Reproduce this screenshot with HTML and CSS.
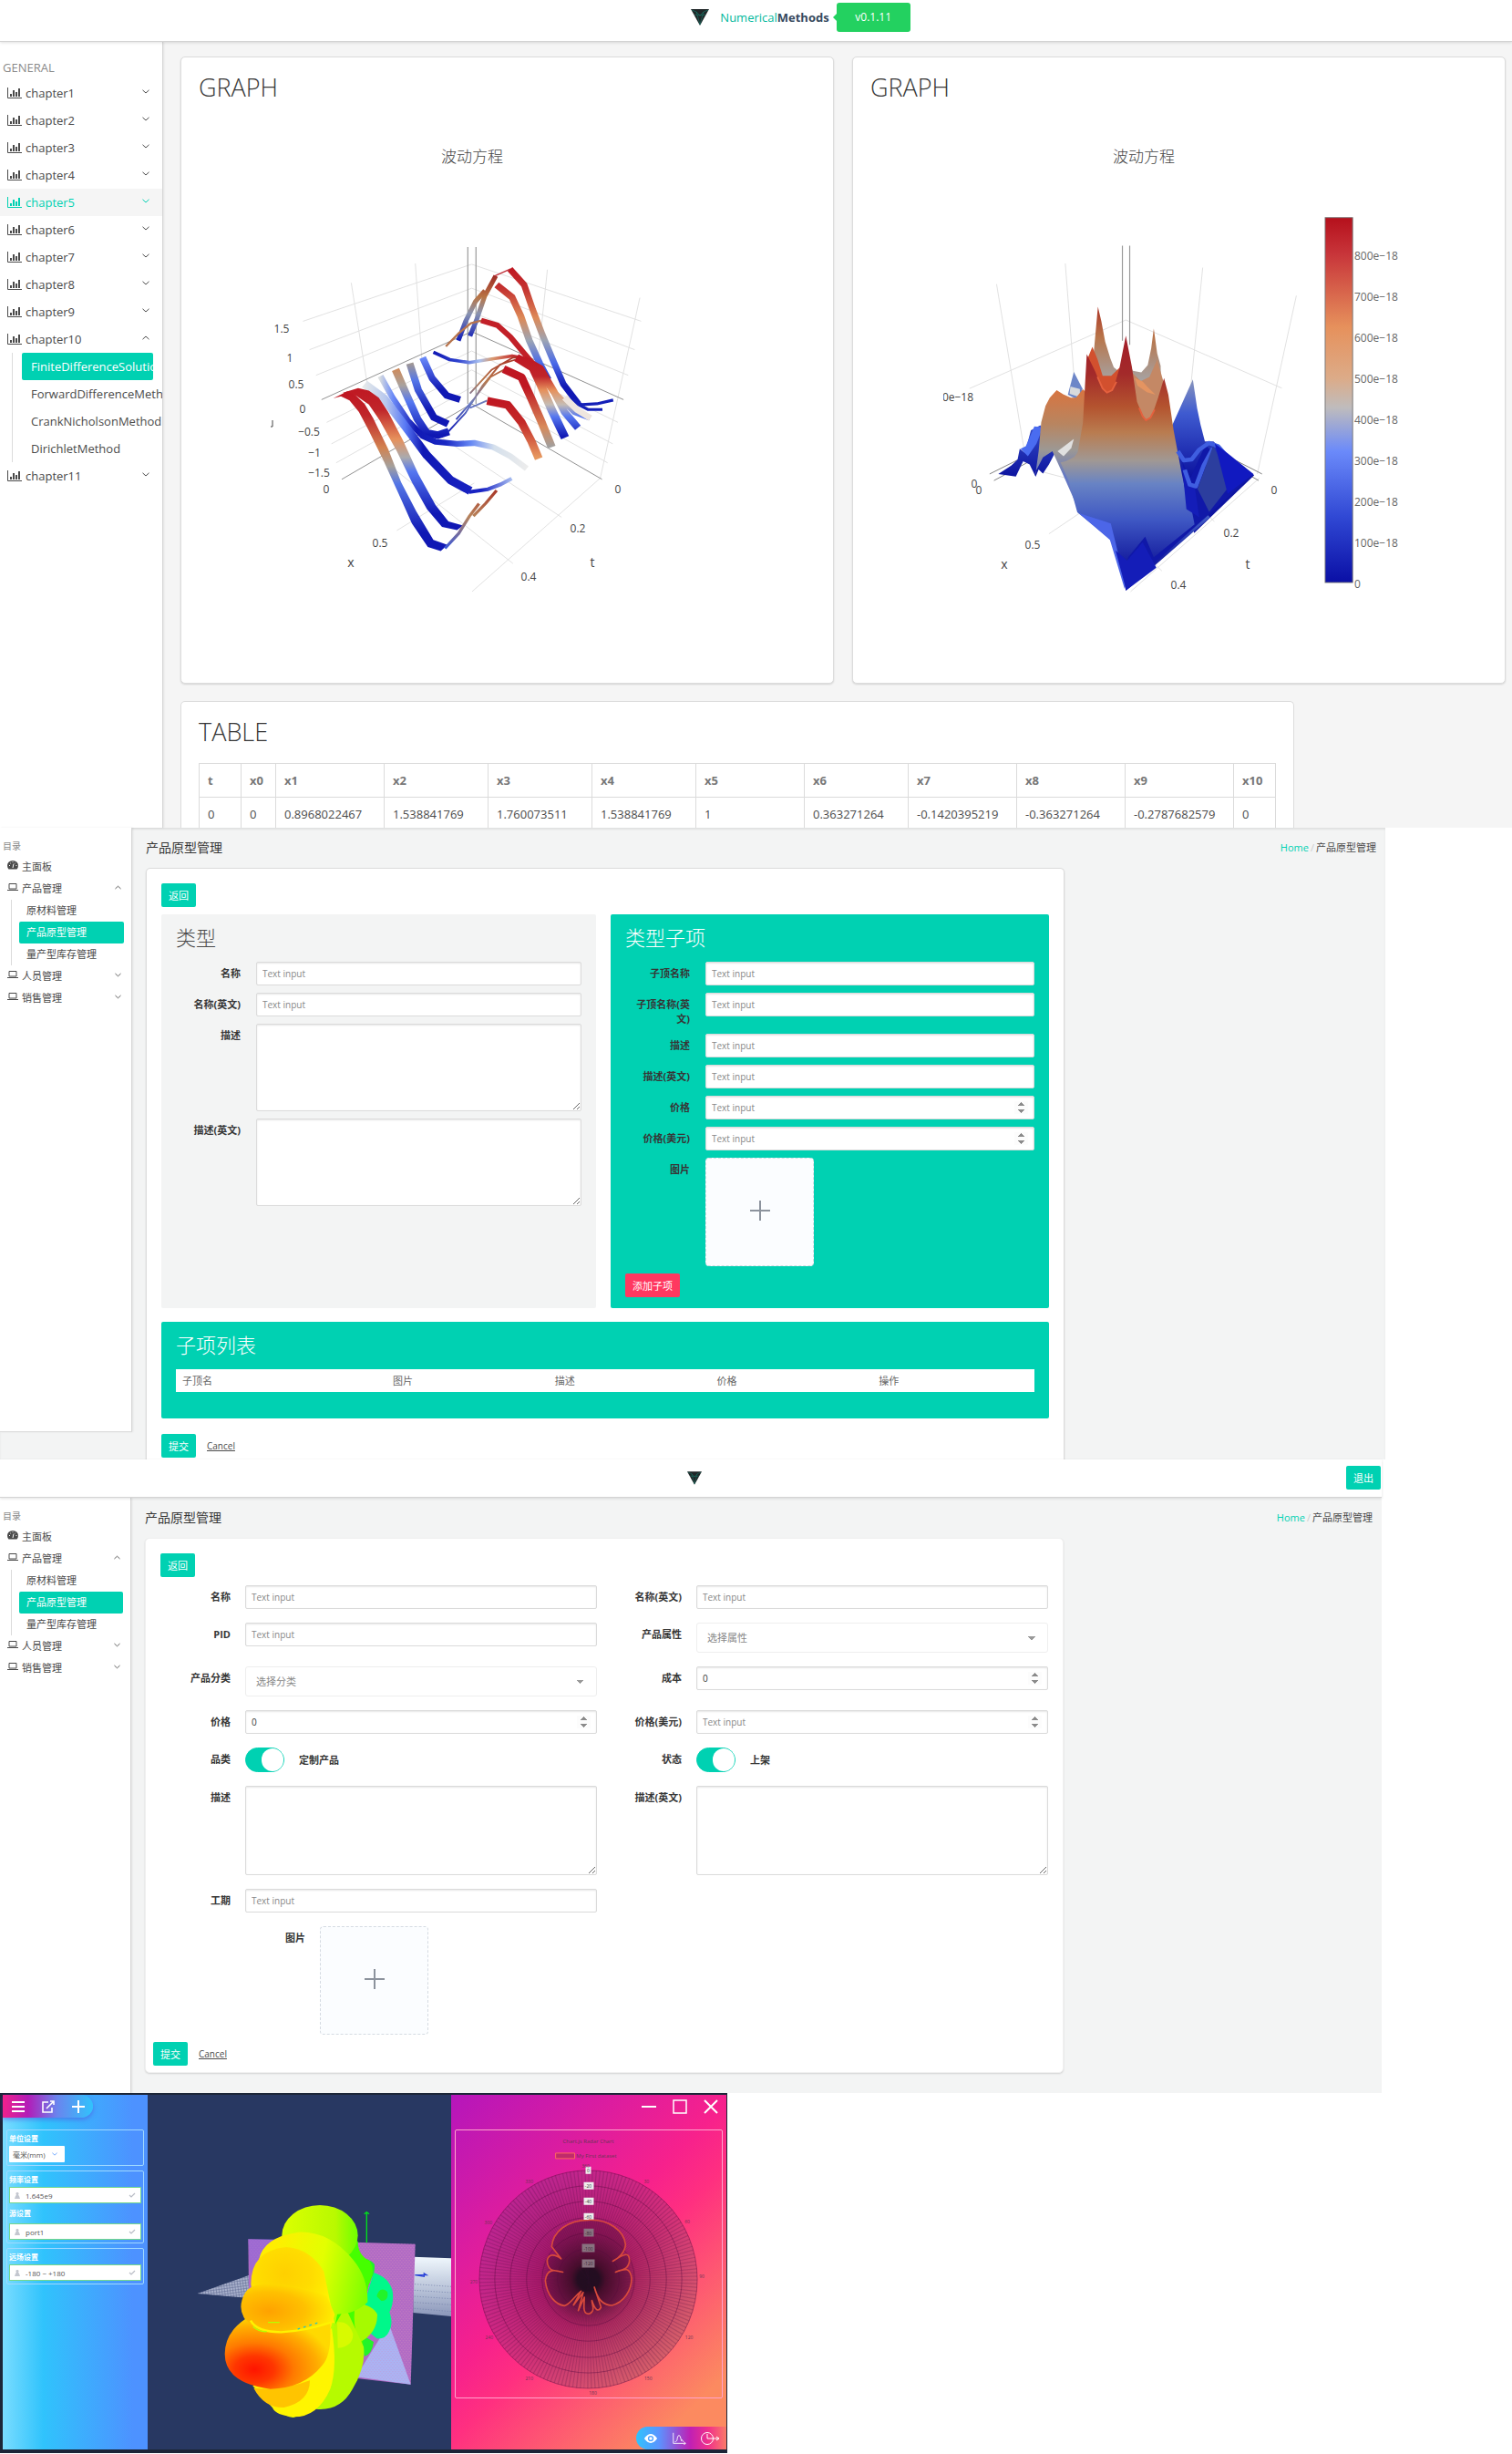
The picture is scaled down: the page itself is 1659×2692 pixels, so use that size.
FILE: index.html
```html
<!DOCTYPE html>
<html lang="zh-CN">
<head>
<meta charset="utf-8">
<meta name="viewport" content="width=device-width, initial-scale=1">
<title>NumericalMethods</title>
<link rel="stylesheet" href="styles.css">
</head>
<body>
<svg class="defs" aria-hidden="true">
  <symbol id="i-bars" viewBox="0 0 16 12"><path d="M.5 0v11.500H16" fill="none" stroke="currentColor" stroke-width="1"/><path d="M3 7h2v3H3zM6 3h2v7H6zM9 5h2v5H9zM12 1h2v9h-2z" fill="currentColor"/></symbol>
  <symbol id="i-down" viewBox="0 0 8 5"><path d="M.5.8 4 4 7.500.8" fill="none" stroke="currentColor" stroke-width="1"/></symbol>
  <symbol id="i-up" viewBox="0 0 8 5"><path d="M.5 4.200 4 1l3.500 3.200" fill="none" stroke="currentColor" stroke-width="1"/></symbol>
  <symbol id="i-laptop" viewBox="0 0 12 9"><path d="M2 1h8v5.500H2zM0 8h12" fill="none" stroke="currentColor" stroke-width="1"/></symbol>
  <symbol id="i-dash" viewBox="0 0 12 10"><path d="M1.500 9.500A6 6 0 0 1 0 5.500a6 5.500 0 0 1 12 0 6 6 0 0 1-1.500 4z" fill="currentColor"/><path d="M6 8 7 3.500M2 5.500h1M9.500 5.500h1M3.300 2.800l.8.700M5.500 1.500h1M8.500 3l.6-.5" stroke="#fff" stroke-width="1"/></symbol>
  <symbol id="i-logo" viewBox="0 0 20 18"><path d="M0 0h20L10 18z" fill="#202628"/><path d="M1 1l5 2 4 14L14 3l5-2M6 3l4 4 4-4M4 6l6 1 6-1" fill="none" stroke="#17806f" stroke-width=".6"/></symbol>
  <symbol id="i-user" viewBox="0 0 6 7"><path d="M3 0a1.500 1.500 0 0 1 1 2.700L5 4l1 3H0l1-3 1-1.300A1.500 1.500 0 0 1 3 0z" fill="#c3c7cf"/></symbol>
  <symbol id="i-tick" viewBox="0 0 8 6"><path d="M1 3l2 2 4-4" fill="none" stroke="#b9bdc6" stroke-width="1.200"/></symbol>
</svg>

<section class="app methods">
  <header class="topbar brandbar">
    <a class="brand" href="#"><svg class="logo"><use href="#i-logo"/></svg><span>Numerical<b>Methods</b></span></a>
    <span class="version">v0.1.11</span>
  </header>
  <div class="split">
    <nav class="side">
      <p class="side-label">GENERAL</p>
      <a class="item" href="#"><svg class="ic"><use href="#i-bars"/></svg>chapter1<svg class="chev"><use href="#i-down"/></svg></a>
      <a class="item" href="#"><svg class="ic"><use href="#i-bars"/></svg>chapter2<svg class="chev"><use href="#i-down"/></svg></a>
      <a class="item" href="#"><svg class="ic"><use href="#i-bars"/></svg>chapter3<svg class="chev"><use href="#i-down"/></svg></a>
      <a class="item" href="#"><svg class="ic"><use href="#i-bars"/></svg>chapter4<svg class="chev"><use href="#i-down"/></svg></a>
      <a class="item hover" href="#"><svg class="ic"><use href="#i-bars"/></svg>chapter5<svg class="chev"><use href="#i-down"/></svg></a>
      <a class="item" href="#"><svg class="ic"><use href="#i-bars"/></svg>chapter6<svg class="chev"><use href="#i-down"/></svg></a>
      <a class="item" href="#"><svg class="ic"><use href="#i-bars"/></svg>chapter7<svg class="chev"><use href="#i-down"/></svg></a>
      <a class="item" href="#"><svg class="ic"><use href="#i-bars"/></svg>chapter8<svg class="chev"><use href="#i-down"/></svg></a>
      <a class="item" href="#"><svg class="ic"><use href="#i-bars"/></svg>chapter9<svg class="chev"><use href="#i-down"/></svg></a>
      <a class="item" href="#"><svg class="ic"><use href="#i-bars"/></svg>chapter10<svg class="chev"><use href="#i-up"/></svg></a>
      <div class="sub">
        <a class="active" href="#">FiniteDifferenceSolution</a>
        <a href="#">ForwardDifferenceMethod</a>
        <a href="#">CrankNicholsonMethod</a>
        <a href="#">DirichletMethod</a>
      </div>
      <a class="item" href="#"><svg class="ic"><use href="#i-bars"/></svg>chapter11<svg class="chev"><use href="#i-down"/></svg></a>
    </nav>
    <main class="content">
      <div class="graphs">
        <article class="card">
          <h2>GRAPH</h2>
          <svg class="plot" viewBox="218 112 677 619">
            <defs>
              <linearGradient id="a1" gradientUnits="userSpaceOnUse" x1="0" y1="845" x2="0" y2="1220"><stop offset="0" stop-color="#bf1722"/><stop offset=".14" stop-color="#c0252a"/><stop offset=".35" stop-color="#d28250"/><stop offset=".47" stop-color="#a5a09b"/><stop offset=".58" stop-color="#5577e6"/><stop offset=".9" stop-color="#1018b4"/></linearGradient>
              <linearGradient id="a2" gradientUnits="userSpaceOnUse" x1="0" y1="830" x2="0" y2="1170"><stop offset="0" stop-color="#bf1722"/><stop offset=".16" stop-color="#c0252a"/><stop offset=".37" stop-color="#e6915c"/><stop offset=".5" stop-color="#aaaaae"/><stop offset=".6" stop-color="#5577f0"/><stop offset=".9" stop-color="#1018b4"/></linearGradient>
              <linearGradient id="a3" gradientUnits="userSpaceOnUse" x1="443" y1="0" x2="787" y2="0"><stop offset="0" stop-color="#e6eaea"/><stop offset=".15" stop-color="#b8c8ee"/><stop offset=".28" stop-color="#5a7af5"/><stop offset=".4" stop-color="#1018b4"/><stop offset=".8" stop-color="#1a24c4"/><stop offset="1" stop-color="#a8bdf0"/></linearGradient>
              <linearGradient id="a4" gradientUnits="userSpaceOnUse" x1="480" y1="0" x2="822" y2="0"><stop offset="0" stop-color="#dadedf"/><stop offset=".09" stop-color="#6d8cf8"/><stop offset=".25" stop-color="#1018b4"/><stop offset=".45" stop-color="#1a28c4"/><stop offset=".62" stop-color="#6688f4"/><stop offset=".78" stop-color="#d5e0ec"/><stop offset="1" stop-color="#ececec"/></linearGradient>
              <linearGradient id="a5" gradientUnits="userSpaceOnUse" x1="0" y1="785" x2="0" y2="945"><stop offset="0" stop-color="#cf8a5a"/><stop offset=".25" stop-color="#aaa29d"/><stop offset=".5" stop-color="#5577f0"/><stop offset="1" stop-color="#1018b4"/></linearGradient>
              <linearGradient id="a6" gradientUnits="userSpaceOnUse" x1="0" y1="770" x2="0" y2="915"><stop offset="0" stop-color="#a59a90"/><stop offset=".3" stop-color="#5577e8"/><stop offset=".8" stop-color="#1018b4"/></linearGradient>
              <linearGradient id="a7" gradientUnits="userSpaceOnUse" x1="0" y1="758" x2="0" y2="855"><stop offset="0" stop-color="#6a8afa"/><stop offset=".8" stop-color="#1018b4"/></linearGradient>
              <linearGradient id="a8" gradientUnits="userSpaceOnUse" x1="605" y1="0" x2="800" y2="0"><stop offset="0" stop-color="#1018b4"/><stop offset=".3" stop-color="#3044d0"/><stop offset=".55" stop-color="#a8c0f0"/><stop offset=".7" stop-color="#d89a70"/><stop offset="1" stop-color="#c0202a"/></linearGradient>
              <linearGradient id="a9" gradientUnits="userSpaceOnUse" x1="0" y1="755" x2="0" y2="950"><stop offset="0" stop-color="#bf1722"/><stop offset=".25" stop-color="#c0252a"/><stop offset=".42" stop-color="#e6915c"/><stop offset=".6" stop-color="#c5bcb4"/><stop offset=".75" stop-color="#5577f0"/><stop offset="1" stop-color="#1018b4"/></linearGradient>
              <linearGradient id="a10" gradientUnits="userSpaceOnUse" x1="0" y1="540" x2="0" y2="880"><stop offset="0" stop-color="#bf1722"/><stop offset=".15" stop-color="#c43230"/><stop offset=".36" stop-color="#dd8a58"/><stop offset=".52" stop-color="#9ca4b4"/><stop offset=".68" stop-color="#4a6ae8"/><stop offset=".85" stop-color="#1018b4"/></linearGradient>
              <linearGradient id="a11" gradientUnits="userSpaceOnUse" x1="0" y1="860" x2="0" y2="1000"><stop offset="0" stop-color="#bf1722"/><stop offset=".4" stop-color="#c42a28"/><stop offset="1" stop-color="#e6985f"/></linearGradient>
              <linearGradient id="a12" gradientUnits="userSpaceOnUse" x1="0" y1="780" x2="0" y2="975"><stop offset="0" stop-color="#bf1722"/><stop offset=".25" stop-color="#bf1722"/><stop offset=".75" stop-color="#d88a5a"/><stop offset="1" stop-color="#a0a0a0"/></linearGradient>
              <linearGradient id="a13" gradientUnits="userSpaceOnUse" x1="0" y1="555" x2="0" y2="715"><stop offset="0" stop-color="#9c2422"/><stop offset=".35" stop-color="#b87444"/><stop offset=".6" stop-color="#8a94b0"/><stop offset="1" stop-color="#1420b8"/></linearGradient>
              <linearGradient id="a14" gradientUnits="userSpaceOnUse" x1="0" y1="760" x2="0" y2="940"><stop offset="0" stop-color="#a83828"/><stop offset=".3" stop-color="#b8784c"/><stop offset=".6" stop-color="#6a7cc0"/><stop offset="1" stop-color="#1018b4"/></linearGradient>
              <linearGradient id="a15" gradientUnits="userSpaceOnUse" x1="0" y1="1080" x2="0" y2="1220"><stop offset="0" stop-color="#a83828"/><stop offset=".45" stop-color="#b8845c"/><stop offset="1" stop-color="#3a58d8"/></linearGradient>
            </defs>
            <g transform="translate(190 50) scale(.47194 .45281)" fill="none" stroke-linejoin="round">
              <path stroke="#dedede" stroke-width="2" d="M302 670 694 532l394 138M317 739 694 590l379 149M332 801 694 648l364 153M357 915 694 742l340 173M368 967 694 788l328 179M379 1013 694 830l316 183M414 577l38 250M563 530l15 230M870 545l-35 350M1085 613l-92 437M520 1177l180-115M993 1050 695 1325M903 1145 600 935M790 1257 480 1000"/>
              <path stroke="#999" stroke-width="2.500" d="M685 490v380M704 490v380"/>
              <path stroke="#888" stroke-width="2" d="M345 860 694 695l353 165M392 1053 694 870l303 183"/>
              <g stroke="url(#a13)"><path stroke-width="11" d="M663 717 680 670 703 622 725 596"/><path stroke-width="11" d="M690 706 705 668 724 610 750 560"/></g>
              <path stroke="#c0303a" stroke-width="3" d="M748 560 785 543"/>
              <path stroke="url(#a10)" stroke-width="15" d="M783 544l33 38 20 60 22 60 24 60 25 60 35 48"/>
              <path stroke="#1420b8" stroke-width="7" d="M930 860l20 12 35-2 38-9M935 868l30 16h33"/>
              <path stroke="url(#a10)" stroke-width="16" d="M752 582l36 30 20 45 20 60 24 55 20 40"/>
              <path stroke="#b8744c" stroke-width="5" d="M634 731 665 698 692 675 718 668"/>
              <path stroke="url(#a9)" stroke-width="14" d="M845 785l38 55 50 50 36 14"/>
              <path stroke="#efe6df" stroke-width="15" d="M910 855l30 30 30 20"/>
              <path stroke="#c22028" stroke-width="13" d="M716 668l38 12 30 28 32 40 25 30"/>
              <path stroke="url(#a8)" stroke-width="8" d="M605 745l38 18 45 7 50-8 50-8 40 8"/>
              <path stroke="url(#a14)" stroke-width="4" d="M690 845 740 788l50-30h15M640 937l40-45 40-67 40-50 36-12M658 908l40-48 40-55 35-20M690 880l40-18"/>
              <path stroke="url(#a9)" stroke-width="20" d="M798 758l38 24 20 45 25 60 30 65"/>
              <path stroke="url(#a9)" stroke-width="17" d="M815 762l38 22 32 56 25 50 31 38"/>
              <path stroke="url(#a12)" stroke-width="19" d="M768 786l42 20 22 50 26 62 22 57"/>
              <path stroke="url(#a11)" stroke-width="19" d="M730 863l48 10 32 42 22 44 18 44"/>
              <path stroke="url(#a7)" stroke-width="16" d="M580 758l22 50 34 42 31 10"/>
              <path stroke="url(#a6)" stroke-width="17" d="M550 772l20 65 36 66 33 16"/>
              <path stroke="url(#a5)" stroke-width="18" d="M517 787l25 60 26 60 22 34 25 5 26-9"/>
              <path stroke="url(#a4)" stroke-width="14" d="M482 803l28 52 35 55 35 38 30 14 50 5 40-2 44 10 40 22 38 30"/>
              <path stroke="url(#a3)" stroke-width="20" d="M445 822l45 35 50 68 50 70 55 60 46 26"/>
              <path stroke="url(#a3)" stroke-width="9" d="M688 1084l44-7 30-12 25-14"/>
              <path fill="url(#a2)" d="M395 843l35-11 25 6 23 17 22 35 35 70 35 80 40 75 30 40 34 10-14 11-35-8-35-43-35-65-35-75-40-75-25-38-30-22-26-2z"/>
              <path fill="url(#a1)" d="M372 857l33-17 20 10 20 20 20 35 35 75 30 80 35 70 40 70 33 12-16 15-30-10-37-57-30-70-35-80-35-75-23-45-22-28-20-10z"/>
              <path stroke="url(#a15)" stroke-width="7" d="M632 1220l32-36 25-42 22-30M698 1142l28-30 26-32"/>
            </g>
            <text class="ctitle" x="518" y="179">波动方程</text>
            <g class="ax"><text x="309" y="366">1.5</text><text x="318" y="398">1</text><text x="325" y="427">0.5</text><text x="332" y="454">0</text><text x="339" y="479">−0.5</text><text x="345" y="502">−1</text><text x="350" y="524">−1.5</text><text x="358" y="542">0</text><text x="417" y="601">0.5</text><text x="678" y="542">0</text><text x="634" y="585">0.2</text><text x="580" y="638">0.4</text><text class="big" x="385" y="623">x</text><text class="big" x="650" y="623">t</text></g>
            <path d="M299 462v7h-2" fill="none" stroke="#444" stroke-width="1"/>
          </svg>
        </article>
        <article class="card">
          <h2>GRAPH</h2>
          <svg class="plot" viewBox="955 112 677 619">
            <defs>
              <linearGradient id="b1" gradientUnits="userSpaceOnUse" x1="0" y1="705" x2="0" y2="1323"><stop offset="0" stop-color="#a31d28"/><stop offset=".15" stop-color="#a32a2a"/><stop offset=".28" stop-color="#b4542f"/><stop offset=".38" stop-color="#b97c50"/><stop offset=".49" stop-color="#a09894"/><stop offset=".58" stop-color="#6883c4"/><stop offset=".72" stop-color="#3f58c4"/><stop offset=".88" stop-color="#1720a0"/><stop offset="1" stop-color="#0d14a8"/></linearGradient>
              <linearGradient id="b2" gradientUnits="userSpaceOnUse" x1="0" y1="635" x2="0" y2="820"><stop offset="0" stop-color="#ad3526"/><stop offset=".4" stop-color="#b8754a"/><stop offset="1" stop-color="#a5a5a8"/></linearGradient>
              <linearGradient id="b3" gradientUnits="userSpaceOnUse" x1="0" y1="835" x2="0" y2="1045"><stop offset="0" stop-color="#d87440"/><stop offset=".4" stop-color="#b88560"/><stop offset=".7" stop-color="#9c9894"/><stop offset="1" stop-color="#6478c4"/></linearGradient>
              <linearGradient id="b4" gradientUnits="userSpaceOnUse" x1="0" y1="810" x2="0" y2="1045"><stop offset="0" stop-color="#8a96bc"/><stop offset=".35" stop-color="#3f5bd0"/><stop offset="1" stop-color="#0d14a0"/></linearGradient>
              <linearGradient id="b5" x1="0" y1="0" x2="0" y2="1"><stop offset="0" stop-color="#b5101c"/><stop offset=".1" stop-color="#c8353a"/><stop offset=".3" stop-color="#e6915c"/><stop offset=".44" stop-color="#dcab88"/><stop offset=".52" stop-color="#bfbcbc"/><stop offset=".64" stop-color="#6b8afa"/><stop offset=".82" stop-color="#3048d4"/><stop offset="1" stop-color="#0a0fa5"/></linearGradient>
            </defs>
            <g transform="translate(920 50) scale(.4713 .45281)">
              <path fill="none" stroke="#dedede" stroke-width="2" d="M305 833 669 667l363 165M368 580l64 400M528 530l20 270M848 540l-28 290M1066 608 975 1040M490 1185l150-105-165-45M875 1155l-20-20M753 1275l-15-15M980 1050 680 1325"/>
              <path fill="none" stroke="#999" stroke-width="2.500" d="M661 487v230M678 487v240"/>
              <path fill="none" stroke="#777" stroke-width="2" d="M352 1040l100-52M362 1056l80-45M870 978l116 62M960 1045l18 11"/>
              <path fill="url(#b4)" d="M372 1040l30-20 15-15 5-26 12 10 14-55 22-12 20 40 20 15-20 40-14 22-10-10-7 18-14-30-15-8-17 37z"/>
              <path fill="#4a6cf0" d="M424 979l12-6 20-48 20 2-15 40-20 30z"/>
              <path fill="url(#b2)" d="M604 635l8 35 9 50 12 40 8 22 15 12 14-40 15 36 20 4 15-18 8-40 6-48 8 60 8 30 4 190H540l45-110 10-120z"/>
              <path fill="#6d86c8" d="M548 793l20 40-6 30-28-15z"/>
              <path fill="#d8dadd" d="M540 828l22 6v20l-24-8z"/>
              <path fill="url(#b4)" d="M825 811l10 70 8 40 10 40h20l30 30 65 52-140 140-58-245z"/>
              <path fill="url(#b3)" d="M458 1045l8-60 6-70 10-40 10-20 16-18 15 10 18 8h12l16-20 20 20-5 100-30 160-34-80-22-50-22 15-18 36z"/>
              <path fill="#d2502e" d="M580 760l11-28 12 30 12 40 20 0 20-20 0 70h-50z"/>
              <path fill="#c48865" d="M684 795l20 20 20-10 18-42 15 55-20 100h-40z"/>
              <path fill="#e49461" d="M690 808l18 8 12 14 18 18-20-6-22-16z"/>
              <path fill="url(#b1)" d="M578 750l20 42 15 40 12 12 15-10 14-50 15-79 14 75 12 85 12 30 8 14 14-8 15-45 14-48 10 40 12 85 18 100 10 50 57 62-196 178-18-85-19-40-76-65-20-75-19-46 12-3 20-10 8-12 12-70z"/>
              <path fill="none" stroke="#e5613e" stroke-width="4" d="M603 805l12 28 10 10 12-6 10-20M700 880l8 20 8 10 10-6 10-20"/>
              <path fill="#e0e0e0" d="M510 985l14 12 18-20 6-22z"/>
              <path fill="#4c66e8" d="M560 1135l60 20 14 5 12 50 22 100-2 8-34-118z"/>
              <path fill="#1018a8" d="M800 1010l19 40 35-80 40 40 72 32-235 218-62 62 5-80 40-50 20 50 95-80z"/>
              <path fill="#141db8" d="M645 1225l27 25 36-45 32 62-70 55zM800 1020l30 55 10 70-30-20z"/>
              <path fill="none" stroke="#3f5ee0" stroke-width="10" stroke-linejoin="round" d="M790 985l14 22 18-2 18-24 22-16 22 8 20 24M806 1030l12 36 14 4 18-50 22-42"/>
              <path fill="#2c3e9e" d="M836 1076l36-104 16 30 20 70-45 60z"/>
              <path fill="#1119c0" d="M876 966l30 24 60 50-60 48z"/>
              <rect x="1133" y="419" width="64" height="884" fill="url(#b5)" stroke="#777" stroke-width="2"/>
            </g>
            <text class="ctitle" x="1255" y="179">波动方程</text>
            <g class="ax"><text x="1051" y="441">0e−18</text><text x="1069" y="536">0</text><text x="1074" y="543">0</text><text x="1133" y="603">0.5</text><text x="1398" y="543">0</text><text x="1351" y="590">0.2</text><text x="1293" y="647">0.4</text><text class="big" x="1102" y="625">x</text><text class="big" x="1369" y="625">t</text></g>
            <path d="M1028 425h7v18h-7z" fill="#fff"/>
            <g class="ax start"><text x="1486" y="286">800e−18</text><text x="1486" y="331">700e−18</text><text x="1486" y="376">600e−18</text><text x="1486" y="421">500e−18</text><text x="1486" y="466">400e−18</text><text x="1486" y="511">300e−18</text><text x="1486" y="556">200e−18</text><text x="1486" y="601">100e−18</text><text x="1486" y="646">0</text></g>
          </svg>
        </article>
      </div>
      <article class="card table-card">
        <h2>TABLE</h2>
        <table class="data">
          <colgroup><col class="c46"><col class="c38"><col class="c119"><col class="c114"><col class="c114"><col class="c114"><col class="c119"><col class="c114"><col class="c119"><col class="c119"><col class="c119"><col class="c46"></colgroup>
          <thead><tr><th>t</th><th>x0</th><th>x1</th><th>x2</th><th>x3</th><th>x4</th><th>x5</th><th>x6</th><th>x7</th><th>x8</th><th>x9</th><th>x10</th></tr></thead>
          <tbody><tr><td>0</td><td>0</td><td>0.8968022467</td><td>1.538841769</td><td>1.760073511</td><td>1.538841769</td><td>1</td><td>0.363271264</td><td>-0.1420395219</td><td>-0.363271264</td><td>-0.2787682579</td><td>0</td></tr></tbody>
        </table>
      </article>
    </main>
  </div>
</section>

<section class="app admin first">
  <div class="split">
    <nav class="side">
      <p class="side-label">目录</p>
      <a class="item" href="#"><svg class="ic"><use href="#i-dash"/></svg>主面板</a>
      <a class="item" href="#"><svg class="ic"><use href="#i-laptop"/></svg>产品管理<svg class="chev"><use href="#i-up"/></svg></a>
      <div class="sub"><a href="#">原材料管理</a><a class="active" href="#">产品原型管理</a><a href="#">量产型库存管理</a></div>
      <a class="item" href="#"><svg class="ic"><use href="#i-laptop"/></svg>人员管理<svg class="chev"><use href="#i-down"/></svg></a>
      <a class="item" href="#"><svg class="ic"><use href="#i-laptop"/></svg>销售管理<svg class="chev"><use href="#i-down"/></svg></a>
    </nav>
    <main class="content">
      <div class="pagehead"><h1>产品原型管理</h1><p class="crumbs"><a href="#">Home</a><i>/</i>产品原型管理</p></div>
      <form class="card">
        <button class="btn" type="button">返回</button>
        <div class="panels">
          <section class="panel grey">
            <h2>类型</h2>
            <div class="field"><label for="p1">名称</label><input id="p1" type="text" placeholder="Text input"></div>
            <div class="field"><label for="p2">名称(英文)</label><input id="p2" type="text" placeholder="Text input"></div>
            <div class="field"><label for="p3">描述</label><textarea id="p3"></textarea></div>
            <div class="field"><label for="p4">描述(英文)</label><textarea id="p4"></textarea></div>
          </section>
          <section class="panel green">
            <h2>类型子项</h2>
            <div class="field"><label for="q1">子顶名称</label><input id="q1" type="text" placeholder="Text input"></div>
            <div class="field"><label for="q2">子顶名称(英文)</label><input id="q2" type="text" placeholder="Text input"></div>
            <div class="field"><label for="q3">描述</label><input id="q3" type="text" placeholder="Text input"></div>
            <div class="field"><label for="q4">描述(英文)</label><input id="q4" type="text" placeholder="Text input"></div>
            <div class="field"><label for="q5">价格</label><input id="q5" type="number" placeholder="Text input"></div>
            <div class="field"><label for="q6">价格(美元)</label><input id="q6" type="number" placeholder="Text input"></div>
            <div class="field"><label for="q7">图片</label><button id="q7" class="upload" type="button" aria-label="图片"><svg viewBox="0 0 24 24"><path d="M12 1v22M1 12h22" stroke="#8c939d" stroke-width="2"/></svg></button></div>
            <button class="btn red" type="button">添加子项</button>
          </section>
        </div>
        <section class="panel green list">
          <h2>子项列表</h2>
          <table class="items"><thead><tr><th class="wide">子顶名</th><th>图片</th><th>描述</th><th>价格</th><th>操作</th></tr></thead></table>
        </section>
        <div class="actions"><button class="btn" type="button">提交</button><a href="#">Cancel</a></div>
      </form>
    </main>
  </div>
</section>

<section class="app admin second">
  <header class="topbar"><svg class="logo"><use href="#i-logo"/></svg><button class="btn" type="button">退出</button></header>
  <div class="split">
    <nav class="side">
      <p class="side-label">目录</p>
      <a class="item" href="#"><svg class="ic"><use href="#i-dash"/></svg>主面板</a>
      <a class="item" href="#"><svg class="ic"><use href="#i-laptop"/></svg>产品管理<svg class="chev"><use href="#i-up"/></svg></a>
      <div class="sub"><a href="#">原材料管理</a><a class="active" href="#">产品原型管理</a><a href="#">量产型库存管理</a></div>
      <a class="item" href="#"><svg class="ic"><use href="#i-laptop"/></svg>人员管理<svg class="chev"><use href="#i-down"/></svg></a>
      <a class="item" href="#"><svg class="ic"><use href="#i-laptop"/></svg>销售管理<svg class="chev"><use href="#i-down"/></svg></a>
    </nav>
    <main class="content">
      <div class="pagehead"><h1>产品原型管理</h1><p class="crumbs"><a href="#">Home</a><i>/</i>产品原型管理</p></div>
      <form class="card">
        <button class="btn" type="button">返回</button>
        <div class="grid">
          <div class="field"><label for="r1">名称</label><input id="r1" type="text" placeholder="Text input"></div>
          <div class="field"><label for="r2">名称(英文)</label><input id="r2" type="text" placeholder="Text input"></div>
          <div class="field"><label for="r3">PID</label><input id="r3" type="text" placeholder="Text input"></div>
          <div class="field"><label for="r4">产品属性</label><select id="r4"><option>选择属性</option></select></div>
          <div class="field"><label for="r5">产品分类</label><select id="r5"><option>选择分类</option></select></div>
          <div class="field"><label for="r6">成本</label><input id="r6" type="number" value="0"></div>
          <div class="field"><label for="r7">价格</label><input id="r7" type="number" value="0"></div>
          <div class="field"><label for="r8">价格(美元)</label><input id="r8" type="number" placeholder="Text input"></div>
          <div class="field"><label for="r9">品类</label><input id="r9" class="switch" type="checkbox" checked><span class="state">定制产品</span></div>
          <div class="field"><label for="r10">状态</label><input id="r10" class="switch" type="checkbox" checked><span class="state">上架</span></div>
          <div class="field"><label for="r11">描述</label><textarea id="r11"></textarea></div>
          <div class="field"><label for="r12">描述(英文)</label><textarea id="r12"></textarea></div>
          <div class="field"><label for="r13">工期</label><input id="r13" type="text" placeholder="Text input"></div>
          <div class="field full"><label for="r14">图片</label><button id="r14" class="upload" type="button" aria-label="图片"><svg viewBox="0 0 24 24"><path d="M12 1v22M1 12h22" stroke="#8c939d" stroke-width="2"/></svg></button></div>
        </div>
        <div class="actions"><button class="btn" type="button">提交</button><a href="#">Cancel</a></div>
      </form>
    </main>
  </div>
</section>

<section class="farfield">
  <aside class="settings">
    <div class="tools left">
      <button type="button" aria-label="菜单"><svg viewBox="0 0 16 14"><path d="M1 2h14M1 7h14M1 12h14" stroke="#fff" stroke-width="2"/></svg></button>
      <button type="button" aria-label="打开"><svg viewBox="0 0 16 14"><path d="M8 2H2v11h10V8M6 9l8-8M10 1h4v4" fill="none" stroke="#fff" stroke-width="1.600"/></svg></button>
      <button type="button" aria-label="添加"><svg viewBox="0 0 16 14"><path d="M8 0v14M1 7h14" stroke="#fff" stroke-width="2"/></svg></button>
    </div>
    <div class="box"><label for="u1">单位设置</label><div class="unit"><select id="u1"><option>毫米(mm)</option></select><svg><use href="#i-down"/></svg></div></div>
    <div class="box">
      <label for="u2">频率设置</label><div class="line"><svg><use href="#i-user"/></svg><input id="u2" type="text" value="1.645e9"><svg class="tick"><use href="#i-tick"/></svg></div>
      <label for="u3">源设置</label><div class="line"><svg><use href="#i-user"/></svg><input id="u3" type="text" value="port1"><svg class="tick"><use href="#i-tick"/></svg></div>
    </div>
    <div class="box"><label for="u4">远场设置</label><div class="line"><svg><use href="#i-user"/></svg><input id="u4" type="text" value="-180 ~ +180"><svg class="tick"><use href="#i-tick"/></svg></div></div>
  </aside>
  <svg class="scene" viewBox="6 27 999 1167" preserveAspectRatio="none">
    <defs>
      <pattern id="mesh" width="9" height="9" patternUnits="userSpaceOnUse" patternTransform="rotate(-8)"><rect width="9" height="9" fill="#a9b1cc"/><path d="M0 1h9M1 0v9" stroke="#5f6b92" stroke-width="2"/></pattern>
      <pattern id="dots" width="10" height="12" patternUnits="userSpaceOnUse"><path fill="#cd86c0" d="M1 1h3v3H1zM6 7h3v3H6z"/></pattern>
      <linearGradient id="beam" x1="0" y1="0" x2="0" y2="1"><stop offset="0" stop-color="#f0f8fd"/><stop offset="1" stop-color="#8b97ba"/></linearGradient>
      <linearGradient id="top" x1="0" x2="1"><stop offset="0" stop-color="#dcff00"/><stop offset=".7" stop-color="#b9f900"/><stop offset="1" stop-color="#6fff00"/></linearGradient>
      <linearGradient id="body" x1="0" x2="1" y2=".3"><stop offset=".2" stop-color="#ffee00"/><stop offset=".6" stop-color="#e3ff00"/><stop offset="1" stop-color="#7dff00"/></linearGradient>
      <radialGradient id="hot" cx=".28" cy=".72" r=".75"><stop offset="0" stop-color="#ff1400"/><stop offset=".25" stop-color="#ff3600"/><stop offset=".5" stop-color="#ff7a00"/><stop offset=".8" stop-color="#ffac00"/><stop offset="1" stop-color="#ffd900"/></radialGradient>
      <radialGradient id="warm" cx=".3" cy=".55" r=".7"><stop offset="0" stop-color="#ffa200"/><stop offset=".55" stop-color="#ffc000"/><stop offset="1" stop-color="#ffee00"/></radialGradient>
      <radialGradient id="gold" cx=".4" cy=".35" r=".65"><stop offset="0" stop-color="#ffd000"/><stop offset=".5" stop-color="#ffdc00"/><stop offset="1" stop-color="#fff500"/></radialGradient>
    </defs>
    <path fill="#283862" d="M0 0h1010v1200H0z"/>
    <path fill="url(#mesh)" d="M170 681 345 619l30 80z"/>
    <path fill="url(#beam)" d="M880 560l125 5v191l-125-12z"/><path stroke="#717fa8" stroke-width="2" stroke-dasharray="4 5" d="M885 650l120 8M884 670l121 8M884 690l121 8M884 710l121 8M884 730l121 10"/>
    <path fill="#b06ac4" d="M337 502l550 16-15 462-530-60z"/><path fill="url(#dots)" d="M337 502l550 16-15 462-67-190-455-190z"/><path fill="#8a68e0" opacity=".5" d="M337 502h100l-93 110z"/>
    <path fill="#aab4f4" d="M800 780l72 200-180-25z"/><path fill="url(#dots)" opacity=".6" d="M800 780l72 200-180-25z"/>
    <path fill="none" stroke="#00e01c" stroke-width="4" d="M727 514v-98M719 419l8-6 8 6"/><path fill="none" stroke="#2b43d8" stroke-width="4" d="M886 620h38l-8-5v10z"/>
    <path fill="#00f88a" d="M750 612q50 15 62 60 6 40-10 70 14 40-2 65-10 24-40 22l-60-50z"/>
    <path fill="#22f32a" d="M695 560q45 5 58 25 2 60-40 50zM760 690q10-35 35-15 6 30-20 30zM700 810l50 30q-5 40-30 48z"/>
    <path fill="#45ff00" d="M640 450l58 60q0 45 40 65 20 30-5 80l-12 60-10 200-90-100z"/>
    <ellipse cx="573" cy="490" rx="125" ry="100" fill="url(#top)"/>
    <path fill="#a6fa00" d="M690 710q60 10 72 40 0 60-55 90-30-40-17-130z"/>
    <path fill="#b6fa00" d="M560 1061q80 8 120-65 45-75 37-140l-60-130-120 200z"/>
    <path fill="url(#body)" d="M372 570q15-75 130-91 100-5 180 90 50 60 48 140-40 40-100 40-30 160-85 260-30 78-60 80-100-10-135-330z"/>
    <path fill="#d8fa00" d="M630 775q40-5 52 40 0 40-50 45z"/>
    <path fill="#fff500" d="M352 985l260-190q20 130-5 200-40 92-120 92-60-5-70-30z"/>
    <path fill="#ffc400" d="M355 992q90 10 185-25 0 70-85 89-65 2-100-64z"/>
    <path fill="url(#gold)" d="M346 650q0-110 115-122 80 5 125 80l35 170-260-30z"/>
    <path fill="url(#warm)" d="M326 680q20-35 90-30 110 5 180 40l26 60-15 50-220 12q-50-20-58-43-30-40-3-89z"/>
    <path fill="url(#hot)" d="M328 764q30 40 110 44 90 0 168-35 8 110-26 145-60 75-170 77-150-20-150-115 0-70 68-116z"/>
    <path fill="none" stroke="#fff200" stroke-width="7" d="M345 770q20 38 100 38 75-3 165-32"/>
    <path fill="none" stroke="#37c7b0" stroke-width="4" stroke-dasharray="8 12" d="M500 798l70-22"/>
    <path fill="none" stroke="#b7ff00" stroke-width="4" d="M402 776h38M353 790q20 18 45 16"/>
  </svg>
  <aside class="radar">
    <div class="winctl">
      <button type="button" aria-label="最小化"><svg viewBox="0 0 16 16"><path d="M0 8h16" stroke="#fff" stroke-width="2"/></svg></button>
      <button type="button" aria-label="最大化"><svg viewBox="0 0 16 16"><path d="M1 1h14v14H1z" fill="none" stroke="#fff" stroke-width="1.500"/></svg></button>
      <button type="button" aria-label="关闭"><svg viewBox="0 0 16 16"><path d="M1 1l14 14M15 1 1 15" stroke="#fff" stroke-width="2"/></svg></button>
    </div>
    <svg class="polar" viewBox="500 2337 293 294">
      <defs><radialGradient id="core"><stop offset="0" stop-color="#0a1018"/><stop offset=".1" stop-color="#0e1018"/><stop offset=".16" stop-color="#330d20" stop-opacity=".9"/><stop offset=".45" stop-color="#4c1040" stop-opacity=".45"/><stop offset="1" stop-color="#4a4060" stop-opacity=".22"/></radialGradient></defs>
      <circle cx="646" cy="2501" r="120" fill="url(#core)"/>
      <circle cx="646" cy="2501" r="60" fill="none" stroke="#3c0a3a" stroke-opacity=".2" stroke-width="120" pathLength="360" stroke-dasharray=".6 1.400"/>
      <g fill="none" stroke="#5a0c40" stroke-opacity=".45"><circle cx="646" cy="2501" r="120"/><circle cx="646" cy="2501" r="103"/><circle cx="646" cy="2501" r="86"/><circle cx="646" cy="2501" r="68"/><circle cx="646" cy="2501" r="51"/><circle cx="646" cy="2501" r="34"/></g>
      <g class="ticks"><path fill="#eee" d="M643 2377h6v8h-6zM641 2394h11v8h-11zM641 2411h11v8h-11zM641 2428h11v8h-11z"/><path fill="#aaa" d="M641 2445h11v9h-11zM639 2462h14v9h-14zM639 2479h14v9h-14z"/>
      <text x="646" y="2383">0</text><text x="646" y="2400">-20</text><text x="646" y="2417">-40</text><text x="646" y="2434">-60</text><text x="646" y="2452">-80</text><text x="646" y="2469">-100</text><text x="646" y="2486">-120</text></g>
      <g transform="translate(490 2290) scale(.33333)" fill="#4a0c30" fill-opacity=".35" stroke="#d84a3c" stroke-width="5" stroke-linejoin="round"><path d="M469 437c-70 0-118 38-122 88l31 40c-20-15-40-18-46 5 0 20 10 32 20 33l32 6c-30-8-53-12-58 28 5 50 35 80 63 83 20-5 30-28 55-48l-25 46 32-42-16 60 20-44c0 25-8 55 15 55 25-10 8-35 10-44 10 30 20 40 30 22l-22-66c10 40 30 60 58 60 40-10 65-50 65-90-5-35-20-33-53-20 20-8 40-5 46-36 0-28-10-30-55 0 20-10 40-30 42-55-5-45-55-84-122-81z"/></g>
      <path fill="#c02a6c" stroke="#ff6a5c" d="M610 2362h21v6h-21z"/>
      <g class="deg"><text class="cap" x="646" y="2351">Chart.js Radar Chart</text><text class="cap" x="655" y="2367">My First dataset</text><text x="643" y="2378">360</text><text x="710" y="2395">30</text><text x="755" y="2439">60</text><text x="771" y="2500">90</text><text x="757" y="2567">120</text><text x="712" y="2612">150</text><text x="651" y="2628">180</text><text x="581" y="2612">210</text><text x="537" y="2567">240</text><text x="520" y="2506">270</text><text x="536" y="2440">300</text><text x="581" y="2395">330</text></g>
    </svg>
    <div class="tools right">
      <button type="button" aria-label="查看"><svg viewBox="0 0 18 14"><path d="M1 7q8-11 16 0-8 11-16 0z" fill="#fff"/><circle cx="9" cy="7" r="3.500" fill="#4aa0ff"/><circle cx="9" cy="7" r="2" fill="#fff"/></svg></button>
      <button type="button" aria-label="曲线"><svg viewBox="0 0 18 14"><path d="M2 0v13h15M15 11l2 2-2 2M4 11q3 0 3-5 2-6 4 0l1 4q1-3 2 1" fill="none" stroke="#fff" stroke-width="1"/></svg></button>
      <button type="button" aria-label="极坐标"><svg class="wide" viewBox="0 0 22 14"><circle cx="8" cy="7" r="6.500" fill="none" stroke="#fff"/><path d="M8 2v5h13M18 5l3 2-3 2" fill="none" stroke="#fff"/></svg></button>
    </div>
  </aside>
</section>
</body>
</html>
```

FILE: styles.css
```css
* { box-sizing: border-box; }
body {
  margin: 0;
  background: #fff;
  color: #4a4a4a;
  font: 13px/20px "Open Sans", "Noto Sans CJK SC", sans-serif;
}
h1, h2, p { margin: 0; }
a { color: inherit; text-decoration: none; }
button, input, textarea, select { font-family: inherit; margin: 0; }
.defs { display: none; }
.app { background: #f5f5f5; }
.split { display: flex; align-items: stretch; }
.content { flex: 1; min-width: 0; }

/* top bars */
.topbar {
  display: flex;
  align-items: center;
  justify-content: center;
  height: 46px;
  background: #fff;
  border-bottom: 1px solid #d4d4d4;
  box-shadow: 0 1px 3px rgba(0, 0, 0, .12);
  position: relative;
}
.brandbar { padding: 0 0 8px 98px; }
.brand { display: flex; align-items: center; gap: 12px; color: #00b89c; font-size: 13px; }
.brand b { color: #36495d; font-weight: 700; }
.logo { width: 20px; height: 18px; }
.version {
  margin-left: 8px;
  width: 81px;
  height: 32px;
  line-height: 32px;
  border-radius: 3px;
  background: #23d160;
  color: #fff;
  font-size: 12px;
  text-align: center;
  position: relative;
}
.version::before {
  content: "";
  position: absolute;
  left: -4px;
  top: 12px;
  border: 4px solid transparent;
  border-left: 0;
  border-right-color: #23d160;
}

/* side menu */
.side {
  flex: none;
  width: 179px;
  padding-top: 18px;
  background: #fff;
  border-right: 1px solid #d6d6d6;
  box-shadow: 1px 0 2px rgba(0, 0, 0, .08);
  overflow: hidden;
}
.side-label { padding-left: 3px; margin-bottom: 3px; color: #8a8a8a; }
.item {
  display: flex;
  align-items: center;
  gap: 4px;
  height: 30px;
  padding: 0 14px 0 8px;
}
.item.hover { background: #f5f5f5; color: #00d1b2; }
.ic { width: 16px; height: 12px; }
.chev { width: 8px; height: 5px; margin: 0 0 4px auto; }
.sub { margin-left: 13px; padding-left: 10px; border-left: 1px solid #dbdbdb; }
.sub a { display: block; line-height: 30px; padding-left: 10px; white-space: nowrap; }
.sub .active { margin-right: 10px; overflow: hidden; border-radius: 2px; background: #00d1b2; color: #fff; }

/* cards */
.card {
  background: #fff;
  border: 1px solid #dcdcdc;
  border-radius: 5px;
  box-shadow: 0 1px 2px rgba(0, 0, 0, .14);
}
.methods .content { padding: 16px 7px 0 19px; }
.methods .card { padding: 18px 19px 19px; }
.methods h2 { font-size: 27px; font-weight: 300; line-height: 30px; color: #363636; }
.graphs { display: grid; grid-template-columns: 1fr 1fr; gap: 20px; margin-bottom: 19px; }
.plot { display: block; width: 100%; }
.plot text { fill: #444; font-size: 12px; text-anchor: middle; }
.plot .ctitle { font-size: 17px; font-weight: 300; }
.plot .big { font-size: 14px; }
.plot .start text { text-anchor: start; fill: #666; }
.methods .table-card { width: fit-content; border-bottom: 0; border-radius: 5px 5px 0 0; padding-bottom: 0; box-shadow: none; }
.data { margin-top: 19px; table-layout: fixed; width: 1181px; border-collapse: collapse; color: #4a4a4a; }
.data th, .data td { border: 1px solid #dbdbdb; padding: 8px 0 8px 9px; text-align: left; }
.data th { color: #777; font-weight: 700; }
.data td { border-bottom: 0; padding-bottom: 5px; }
.c46 { width: 46px; } .c38 { width: 38px; } .c114 { width: 114px; } .c119 { width: 119px; }

/* product admin */
.admin { max-width: 1520px; background: #f3f4f4; font-size: 11px; }
.admin.second { max-width: 1516px; }
.admin.first { box-shadow: inset 0 2px 2px rgba(0, 0, 0, .08); }
.admin .side { width: 145px; padding-top: 10px; }
.admin.first .side { margin-bottom: 30px; border-bottom: 1px solid #dcdcdc; }
.admin.second .side { width: 144px; }
.admin .side-label { font-size: 10px; margin-bottom: 1px; }
.admin .item { height: 24px; padding: 0 11px 0 8px; }
.admin .ic { width: 12px; height: 10px; margin-bottom: 4px; }
.admin .chev { width: 7px; }
.admin .sub { margin-left: 12px; padding-left: 8px; }
.admin .sub a { line-height: 24px; padding-left: 8px; }
.admin .sub .active { margin-right: 8px; }
.admin .content { padding: 12px 10px 0 15px; }
.pagehead { display: flex; justify-content: space-between; margin-bottom: 12px; }
.pagehead h1 { font-size: 14px; font-weight: 400; color: #363636; }
.crumbs a { color: #00d1b2; }
.crumbs i { margin: 0 2px; color: #ccc; font-style: normal; }
.admin .card { max-width: 1008px; padding: 16px 16px 2px; }
.admin.first .card { border-bottom: 0; border-radius: 5px 5px 0 0; }
.btn {
  display: block;
  height: 26px;
  padding: 0 8px;
  border: 0;
  border-radius: 2px;
  background: #00d1b2;
  color: #fff;
  font-size: 11px;
}
.btn.red { background: #ff3860; }
.topbar .btn { position: absolute; right: 1px; top: 7px; }
.panels { display: grid; grid-template-columns: 477px 1fr; gap: 16px; margin-top: 8px; }
.panel { padding: 11px 16px 12px; border-radius: 2px; }
.panel.grey { background: #f3f4f4; }
.panel.green { background: #00d1b2; }
.panel h2 { margin-bottom: 13px; font-size: 22px; font-weight: 300; line-height: 28px; color: #4a4a4a; }
.panel.green h2 { color: #fff; }
.field { display: flex; align-items: flex-start; gap: 17px; margin-bottom: 8px; }
.field label { flex: none; width: 71px; padding-top: 5px; line-height: 16px; font-weight: 700; text-align: right; color: #363636; }
.field input, .field textarea, .field select {
  flex: 1;
  min-width: 0;
  height: 26px;
  padding: 0 6px;
  border: 1px solid #dbdbdb;
  border-radius: 2px;
  background: #fff;
  box-shadow: inset 0 1px 2px rgba(10, 10, 10, .1);
  color: #363636;
  font-size: 10px;
}
.field textarea { height: 96px; resize: vertical; }
.field ::placeholder { color: #888; }
input[type=number]::-webkit-inner-spin-button { opacity: 1; height: 14px; }
.upload {
  width: 119px;
  height: 119px;
  padding: 0;
  border: 1px dashed #d5dbe2;
  border-radius: 4px;
  background: #fbfdff;
}
.upload svg { width: 24px; height: 24px; }
.list { margin-top: 15px; padding-bottom: 29px; }
.items { width: 100%; table-layout: fixed; border-collapse: collapse; background: #fff; }
.items th { padding: 0 0 0 7px; line-height: 25px; font-weight: 400; text-align: left; color: #666; }
.items .wide { width: 231px; }
.actions { display: flex; align-items: center; gap: 12px; margin-top: 17px; }
.actions a { font-size: 10px; text-decoration: underline; }

.second .topbar { height: 42px; }
.second .logo { width: 16px; height: 15px; margin-left: 8px; }
.second .card { margin-bottom: 22px; padding-bottom: 7px; border-color: #f0f0f0; }
.grid { display: grid; grid-template-columns: 1fr 1fr; gap: 15px 16px; margin-top: 9px; }
.grid .field { margin: 0; gap: 16px; }
.grid .field label { width: 77px; }
.grid .field textarea { height: 98px; }
.grid .full { grid-column: 1 / -1; }
.grid .full label { width: 159px; }
.grid .field select {
  height: 33px;
  padding: 0 11px;
  appearance: none;
  border-color: #eee;
  border-radius: 3px;
  color: #888;
  font-size: 11px;
  box-shadow: none;
  background: linear-gradient(45deg, transparent 50%, #999 50%) right 17px center / 4px 4px no-repeat, linear-gradient(-45deg, transparent 50%, #999 50%) right 13px center / 4px 4px no-repeat, #fff;
}
.grid .switch {
  flex: none;
  appearance: none;
  width: 43px;
  height: 27px;
  padding: 0 0 0 17px;
  border: 1px solid #00d1b2;
  border-radius: 14px;
  background: #00d1b2;
  box-shadow: none;
}
.switch::before { content: ""; display: block; width: 24px; height: 25px; border-radius: 13px; background: #fff; }
.state { line-height: 27px; font-weight: 700; color: #363636; }
.second .actions { margin: 8px 0 0 -8px; }

/* far-field viewer */
.farfield {
  display: grid;
  grid-template-columns: 159px 1fr 302px;
  max-width: 798px;
  padding: 2px 1px 4px 3px;
  background: #1c2638;
}
.settings { background: linear-gradient(90deg, #79dcff, #30c3fc 28%, #4d92ff 90%); }
.tools { display: flex; align-items: center; width: 99px; height: 25px; }
.tools button, .winctl button { padding: 0; border: 0; background: none; line-height: 0; }
.tools svg { width: 16px; height: 14px; }
.tools .wide { width: 22px; }
.tools.left { justify-content: space-around; margin-bottom: 13px; border-radius: 0 13px 13px 0; background: linear-gradient(90deg, #f0218c, #b21cb8 28%, #6a84ee 60%, #30c3fc); box-shadow: 0 2px 5px rgba(90, 60, 220, .5); }
.box { margin: 0 4px 5px; padding: 0 2px 3px; border: 1px solid #9fd8ff; border-radius: 2px; font-size: 8px; }
.box label { display: block; line-height: 17px; font-weight: 700; color: #fff; }
.unit { display: flex; align-items: center; width: 61px; height: 18px; padding: 0 8px 0 4px; border-radius: 1px; background: #fff; }
.unit select { flex: 1; min-width: 0; padding: 0; border: 0; appearance: none; background: none; color: #555; font-size: 8px; }
.unit svg { flex: none; width: 6px; height: 4px; color: #4d92ff; }
.line { display: flex; align-items: center; gap: 6px; height: 18px; padding: 0 5px; border: 1px solid #74d88a; background: #fff; }
.line + label { line-height: 22px; }
.line svg { width: 6px; height: 7px; flex: none; }
.line .tick { width: 8px; height: 6px; }
.line input { flex: 1; min-width: 0; border: 0; padding: 0; height: 14px; font-size: 8px; color: #555; background: none; }
.scene { display: block; width: 100%; height: 100%; min-height: 389px; }
.radar { display: flex; flex-direction: column; background: linear-gradient(135deg, #b516bb, #f7218c 45%, #ff2f80 55%, #fc8a60 88%); }
.winctl { display: flex; justify-content: flex-end; align-items: flex-start; gap: 18px; padding: 5px 9px 0 0; height: 38px; }
.winctl svg { width: 16px; height: 16px; }
.polar { display: block; margin: 0 4px; border: 1px solid #ffa3cd; border-radius: 2px; }
.polar text { font-size: 5px; text-anchor: middle; fill: #6a3555; }
.polar .cap { font-size: 6px; }
.polar .ticks text { fill: #333; }
.tools.right { align-self: flex-end; justify-content: space-around; margin-top: auto; border-radius: 13px 0 0 13px; background: linear-gradient(90deg, #30c3fc, #5a94ff 25%, #c020b4 60%, #f0318a 80%, #fb7a68); }
```
